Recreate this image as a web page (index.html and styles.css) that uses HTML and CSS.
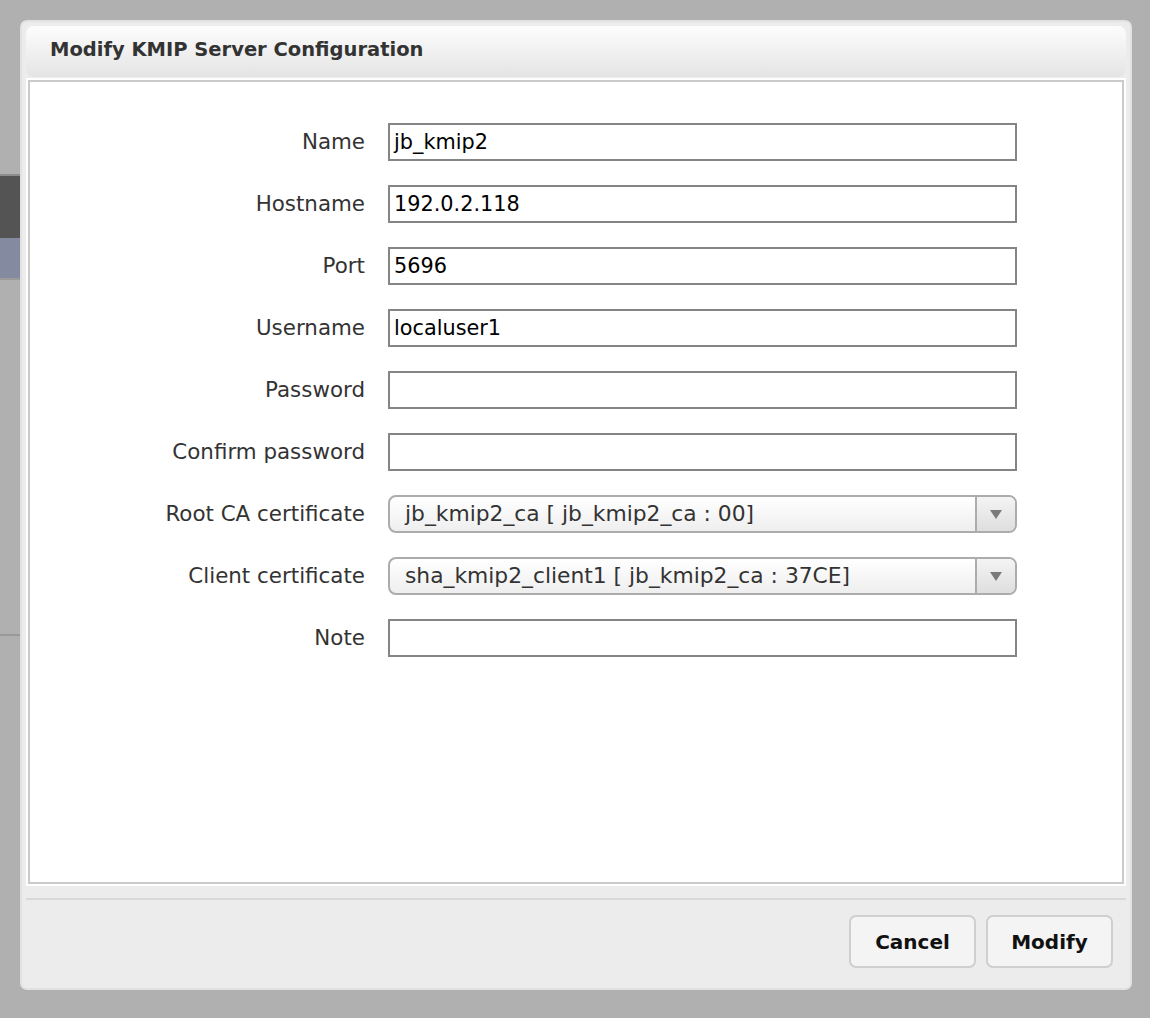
FILE: index.html
```html
<!DOCTYPE html>
<html>
<head>
<meta charset="utf-8">
<link rel="stylesheet" href="styles.css">
</head>
<body>
<div class="page">
  <div class="page-top"></div>
  <div class="page-header"></div>
  <div class="page-row"></div>
  <div class="page-list"></div>
  <div class="page-rest"></div>
</div>
<div class="dialog">
  <div class="dialog-title">Modify KMIP Server Configuration</div>
  <div class="dialog-body">
    <form class="form">
      <label class="lbl">Name</label>
      <div class="input">jb_kmip2</div>
      <label class="lbl">Hostname</label>
      <div class="input">192.0.2.118</div>
      <label class="lbl">Port</label>
      <div class="input">5696</div>
      <label class="lbl">Username</label>
      <div class="input">localuser1</div>
      <label class="lbl">Password</label>
      <div class="input"></div>
      <label class="lbl">Confirm password</label>
      <div class="input"></div>
      <label class="lbl">Root CA certificate</label>
      <div class="select"><span class="select-text">jb_kmip2_ca [ jb_kmip2_ca : 00]</span><span class="select-arrow"><svg width="12" height="9" viewBox="0 0 12 9"><path d="M0 0H12L6 9Z" fill="#7a7a7a"/></svg></span></div>
      <label class="lbl">Client certificate</label>
      <div class="select"><span class="select-text">sha_kmip2_client1 [ jb_kmip2_ca : 37CE]</span><span class="select-arrow"><svg width="12" height="9" viewBox="0 0 12 9"><path d="M0 0H12L6 9Z" fill="#7a7a7a"/></svg></span></div>
      <label class="lbl">Note</label>
      <div class="input"></div>
    </form>
  </div>
  <div class="dialog-footer">
    <button class="btn" type="button">Cancel</button>
    <button class="btn" type="button">Modify</button>
  </div>
</div>
</body>
</html>
```
FILE: styles.css
```css
html, body {
  margin: 0;
  padding: 0;
}
body {
  width: 1150px;
  height: 1018px;
  background: #b0b0b0;
  font-family: "DejaVu Sans", Verdana, sans-serif;
  overflow: hidden;
  position: relative;
}
.page {
  width: 900px;
  display: flex;
  flex-direction: column;
}
.page-top {
  height: 174px;
}
.page-header {
  height: 62px;
  background: #545454;
  border-top: 2px solid #8c8c8c;
}
.page-row {
  height: 40px;
  background: #848a9f;
  border-bottom: 2px solid #9a9a9a;
}
.page-list {
  height: 354px;
  border-bottom: 2px solid #999;
}
.dialog {
  position: absolute;
  left: 20px;
  top: 20px;
  width: 1112px;
  height: 970px;
  box-sizing: border-box;
  background: #ececec;
  border: 2px solid #e2e2e2;
  border-radius: 7px;
  padding: 4px 4px 0 4px;
  display: flex;
  flex-direction: column;
}
.dialog-title {
  height: 51px;
  box-sizing: border-box;
  border-radius: 8px;
  background: linear-gradient(#fdfdfd, #e4e4e4);
  padding: 12px 0 0 24px;
  font-weight: bold;
  font-size: 19.5px;
  color: #333;
}
.dialog-body {
  margin: 3px 2px 0 2px;
  height: 804px;
  box-sizing: border-box;
  background: #fff;
  border: 2px solid #cacaca;
  box-shadow: 0 0 0 2px #fff;
}
.form {
  display: grid;
  grid-template-columns: 335px 629px;
  column-gap: 23px;
  row-gap: 24px;
  padding-top: 41px;
  margin: 0;
}
.lbl {
  font-size: 21.4px;
  color: #333;
  text-align: right;
  line-height: 38px;
  height: 38px;
}
.input {
  height: 38px;
  box-sizing: border-box;
  border: 2px solid #858585;
  font-size: 20.8px;
  color: #000;
  line-height: 34px;
  padding-left: 4px;
}
.select {
  height: 38px;
  box-sizing: border-box;
  border: 2px solid #acacac;
  border-radius: 8px;
  background: linear-gradient(#ffffff, #eeeeee);
  display: flex;
  overflow: hidden;
}
.select-text {
  flex: 1;
  font-size: 21.8px;
  color: #333;
  line-height: 34px;
  padding-left: 15px;
}
.select-arrow {
  width: 38px;
  border-left: 2px solid #acacac;
  background: linear-gradient(#f4f4f4, #dedede);
  display: flex;
  align-items: center;
  justify-content: center;
}
.dialog-footer {
  margin-top: 14px;
  border-top: 2px solid #d8d8d8;
  flex: 1;
  display: flex;
  justify-content: flex-end;
  align-items: flex-start;
  gap: 10px;
  padding: 15px 13px 0 0;
}
.btn {
  width: 127px;
  height: 53px;
  box-sizing: border-box;
  border: 2px solid #cfcfcf;
  border-radius: 7px;
  background: #f4f4f4;
  font-family: "DejaVu Sans", Verdana, sans-serif;
  font-weight: bold;
  font-size: 20px;
  color: #111;
  padding: 0;
}
```
